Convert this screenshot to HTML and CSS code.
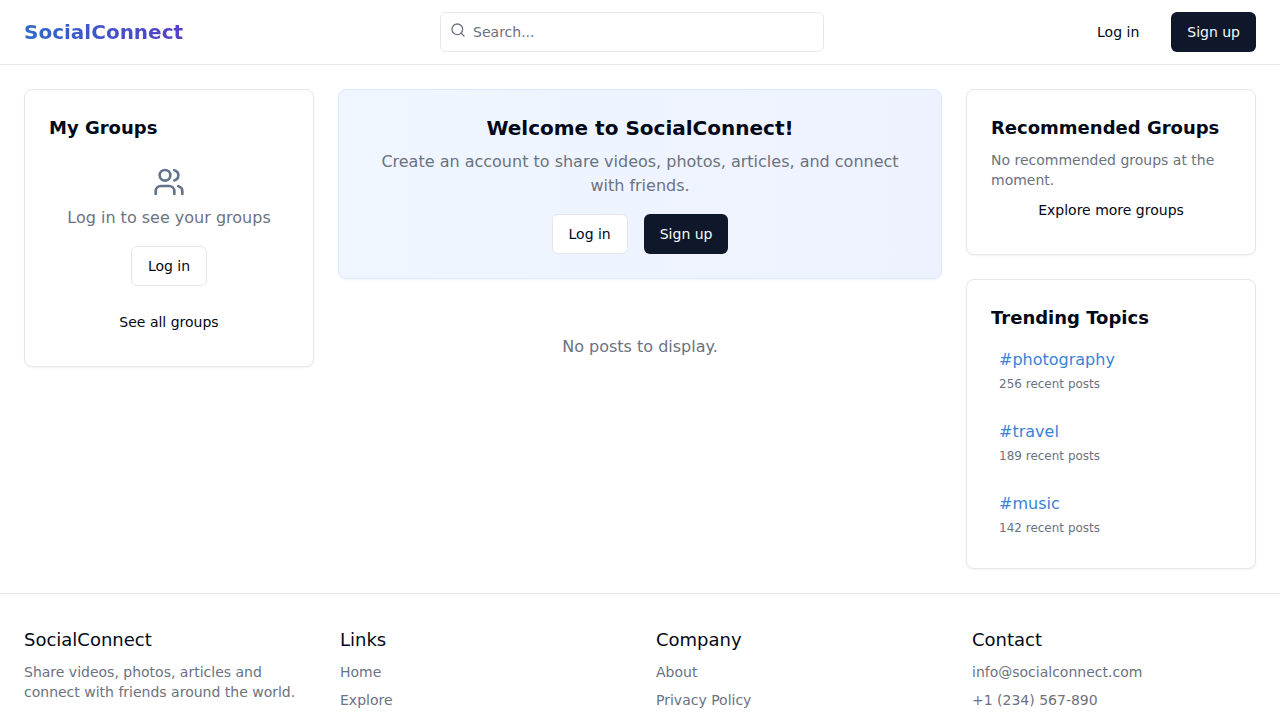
FILE: index.html
```html
<!DOCTYPE html>
<html lang="en">
<head>
<meta charset="utf-8">
<meta name="viewport" content="width=device-width, initial-scale=1">
<title>SocialConnect</title>
<link rel="stylesheet" href="styles.css">
</head>
<body>
<header class="topbar">
  <a class="brand" href="#">SocialConnect</a>
  <form class="search" role="search">
    <svg class="search-icon" viewBox="0 0 24 24" aria-hidden="true"><circle cx="11" cy="11" r="8"/><path d="m21 21-4.3-4.3"/></svg>
    <input class="search-input" type="search" placeholder="Search..." aria-label="Search">
  </form>
  <nav class="actions">
    <button class="btn btn-ghost" type="button">Log in</button>
    <button class="btn btn-primary" type="button">Sign up</button>
  </nav>
</header>

<main class="layout">
  <aside class="column">
    <section class="card">
      <h2 class="card-title">My Groups</h2>
      <div class="groups-empty">
        <svg class="groups-icon" viewBox="0 0 24 24" aria-hidden="true"><path d="M16 21v-2a4 4 0 0 0-4-4H6a4 4 0 0 0-4 4v2"/><circle cx="9" cy="7" r="4"/><path d="M22 21v-2a4 4 0 0 0-3-3.87"/><path d="M16 3.13a4 4 0 0 1 0 7.75"/></svg>
        <p class="muted">Log in to see your groups</p>
        <button class="btn btn-outline" type="button">Log in</button>
      </div>
      <button class="btn btn-ghost btn-block" type="button">See all groups</button>
    </section>
  </aside>

  <div class="column">
    <section class="card welcome">
      <h1 class="welcome-title">Welcome to SocialConnect!</h1>
      <p class="muted">Create an account to share videos, photos, articles, and connect with friends.</p>
      <div class="welcome-actions">
        <button class="btn btn-outline" type="button">Log in</button>
        <button class="btn btn-primary" type="button">Sign up</button>
      </div>
    </section>
    <p class="muted feed-empty">No posts to display.</p>
  </div>

  <aside class="column">
    <section class="card">
      <h2 class="card-title">Recommended Groups</h2>
      <p class="muted small card-text">No recommended groups at the moment.</p>
      <button class="btn btn-ghost btn-block" type="button">Explore more groups</button>
    </section>
    <section class="card">
      <h2 class="card-title">Trending Topics</h2>
      <ul class="topics">
        <li class="topic"><a class="topic-link" href="#">#photography</a><span class="topic-count">256 recent posts</span></li>
        <li class="topic"><a class="topic-link" href="#">#travel</a><span class="topic-count">189 recent posts</span></li>
        <li class="topic"><a class="topic-link" href="#">#music</a><span class="topic-count">142 recent posts</span></li>
      </ul>
    </section>
  </aside>
</main>

<footer class="footer">
  <section class="footer-group">
    <h3 class="footer-title">SocialConnect</h3>
    <p class="muted small">Share videos, photos, articles and connect with friends around the world.</p>
  </section>
  <section class="footer-group">
    <h3 class="footer-title">Links</h3>
    <a class="muted small" href="#">Home</a>
    <a class="muted small" href="#">Explore</a>
  </section>
  <section class="footer-group">
    <h3 class="footer-title">Company</h3>
    <a class="muted small" href="#">About</a>
    <a class="muted small" href="#">Privacy Policy</a>
  </section>
  <section class="footer-group">
    <h3 class="footer-title">Contact</h3>
    <p class="muted small">info@socialconnect.com</p>
    <p class="muted small">+1 (234) 567-890</p>
  </section>
</footer>
</body>
</html>
```
FILE: styles.css
```css
:root {
  --ink: #020817;
  --muted: #6b7280;
  --line: #e5e7eb;
  --navy: #0f172a;
}

*, *::before, *::after { box-sizing: border-box; }

body {
  margin: 0;
  background: #fff;
  color: var(--ink);
  font-family: "DejaVu Sans", sans-serif;
  font-size: 16px;
  line-height: 24px;
}

h1, h2, h3, p, ul { margin: 0; padding: 0; }
ul { list-style: none; }
a { color: inherit; text-decoration: none; }
svg { fill: none; stroke: currentColor; stroke-width: 2; stroke-linecap: round; stroke-linejoin: round; }

.muted { color: var(--muted); }
.small { font-size: 14px; line-height: 20px; }

.topbar {
  display: flex;
  align-items: center;
  justify-content: space-between;
  padding: 12px 24px;
  border-bottom: 1px solid var(--line);
}

.brand {
  font-size: 20px;
  line-height: 28px;
  font-weight: 700;
  background: linear-gradient(to right, #2f69c8, #5540c8);
  -webkit-background-clip: text;
  background-clip: text;
  color: transparent;
}

.search { position: relative; width: 100%; max-width: 384px; }
.search-icon { position: absolute; left: 10px; top: 10px; width: 16px; height: 16px; color: var(--muted); }
.search-input {
  display: block;
  width: 100%;
  height: 40px;
  padding: 8px 12px 8px 32px;
  border: 1px solid var(--line);
  border-radius: 6px;
  background: #fff;
  color: var(--ink);
  font: inherit;
  font-size: 14px;
  line-height: 20px;
  appearance: none;
}
.search-input::placeholder { color: var(--muted); opacity: 1; }

.actions { display: flex; gap: 16px; }

.btn {
  padding: 10px 16px;
  border: 0;
  border-radius: 6px;
  font: inherit;
  font-size: 14px;
  line-height: 20px;
  color: var(--ink);
  background: transparent;
  white-space: nowrap;
  cursor: pointer;
}
.btn-outline { padding: 9px 16px; border: 1px solid var(--line); background: #fff; }
.btn-primary { background: var(--navy); color: #f8fafc; }
.btn-block { display: block; width: 100%; }

.layout {
  display: grid;
  grid-template-columns: repeat(4, minmax(0, 1fr));
  align-items: start;
  gap: 24px;
  padding: 24px;
}
.column { display: flex; flex-direction: column; gap: 24px; }
.column:nth-child(2) { grid-column: span 2; }

.card {
  padding: 24px;
  border: 1px solid var(--line);
  border-radius: 8px;
  background: #fff;
  box-shadow: 0 1px 2px rgba(0, 0, 0, 0.05);
}
.card-title { font-size: 18px; line-height: 28px; font-weight: 600; }
.card-text { margin-top: 8px; }

.groups-empty { padding: 24px 0 16px; text-align: center; }
.groups-icon { display: block; width: 32px; height: 32px; margin: 0 auto 8px; color: #64748b; }
.groups-empty .btn { margin-top: 16px; }

.welcome { background: linear-gradient(to right, #eff6ff, #eef2ff); border-color: #dbeafe; text-align: center; }
.welcome-title { margin-bottom: 8px; font-size: 20px; line-height: 28px; font-weight: 700; }
.welcome-actions { display: flex; justify-content: center; gap: 16px; margin-top: 16px; }

.feed-empty { padding: 32px 0; text-align: center; }

.topics { display: flex; flex-direction: column; gap: 12px; margin-top: 8px; }
.topic { display: flex; flex-direction: column; align-items: flex-start; gap: 4px; padding: 8px; }
.topic-link { color: #3b82d6; }
.topic-count { font-size: 12px; line-height: 16px; color: var(--muted); }

.footer {
  display: grid;
  grid-template-columns: repeat(4, minmax(0, 1fr));
  gap: 32px;
  padding: 32px 24px;
  border-top: 1px solid var(--line);
}
.footer-group { display: flex; flex-direction: column; align-items: flex-start; gap: 8px; }
.footer-title { font-size: 18px; line-height: 28px; font-weight: 400; }
```
